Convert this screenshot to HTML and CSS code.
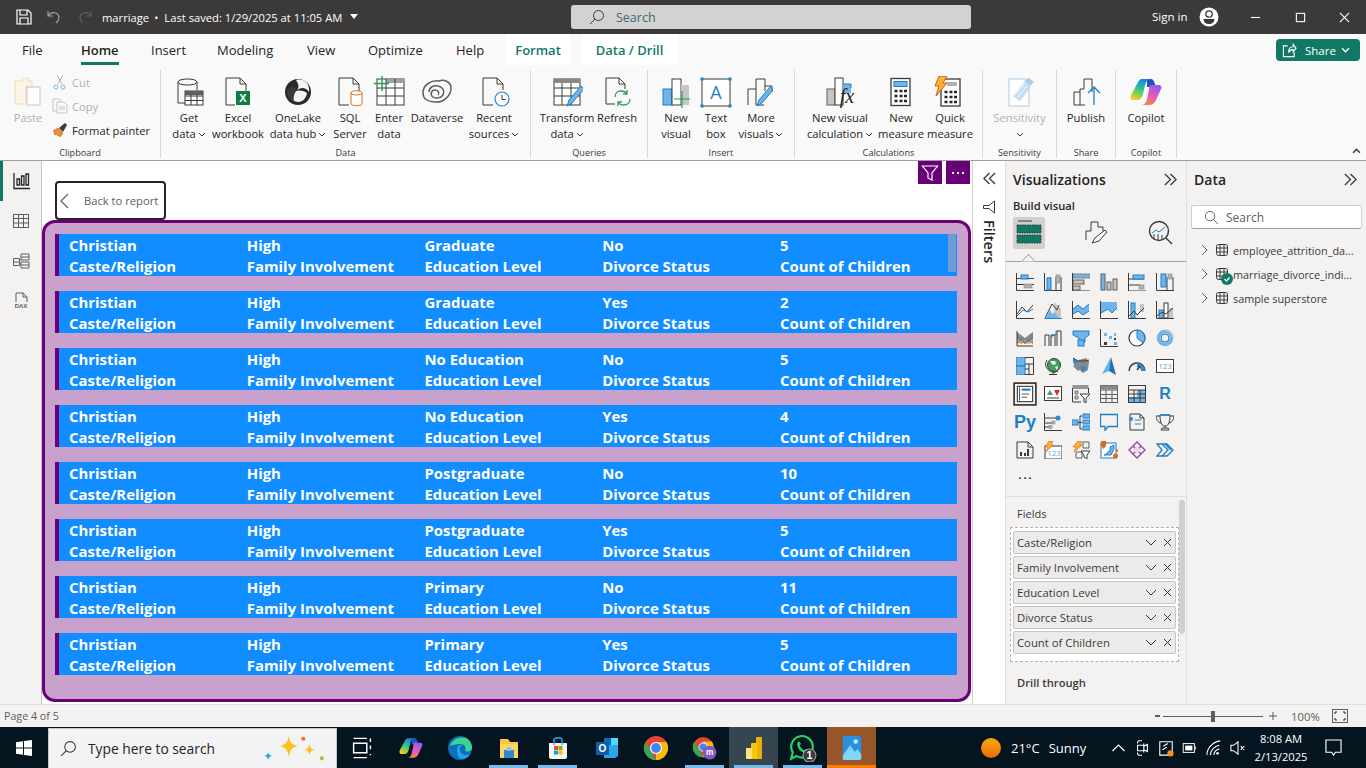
FILE: index.html
```html
<!DOCTYPE html>
<html lang="en">
<head>
<meta charset="utf-8">
<title>marriage - Power BI Desktop</title>
<link rel="stylesheet" href="styles.css">
</head>
<body>
<svg class="defs" aria-hidden="true">
  <defs>
    <linearGradient id="cp1" x1="0.700" y1="0" x2="0.300" y2="1"><stop offset="0" stop-color="#1b7fe0"/><stop offset=".45" stop-color="#27c0a0"/><stop offset=".75" stop-color="#8ed04a"/><stop offset="1" stop-color="#f6c833"/></linearGradient>
    <linearGradient id="cp2" x1="0.800" y1="0" x2="0.200" y2="1"><stop offset="0" stop-color="#8a5cf0"/><stop offset=".5" stop-color="#e45bb5"/><stop offset="1" stop-color="#f98a4a"/></linearGradient>
  </defs>
  <symbol id="chev" viewBox="0 0 8 5"><path class="k" d="M1 1l3 3 3-3"/></symbol>
  <symbol id="dbl" viewBox="0 0 14 14"><path class="k15" d="M1 1l6 6-6 6M7 1l6 6-6 6"/></symbol>
  <symbol id="tbl" viewBox="0 0 14 14"><rect class="k" x="1.5" y="1.5" width="11" height="11" rx="2"/><path class="k" d="M5 1.5v11M9 1.5v11M1.5 5h11M1.500 9h11"/></symbol>
  <symbol id="mag" viewBox="0 0 16 16"><circle class="k" cx="9.5" cy="6.5" r="5"/><path class="k" d="M6 10l-5 5"/></symbol>
  <symbol id="cop" viewBox="0 0 32 32">
    <path fill="#2255c4" d="M17 3h4c2 0 3 2 4 5l1 3h-9z"/>
    <path fill="url(#cp1)" d="M12 3h9c-3 0-5 2-6 6l-2 9c-1 4-3 6-6 6H3c-2 0-3-2-2-5L7 8c1-3 3-5 5-5z"/>
    <path fill="url(#cp2)" d="M21 9h8c2 0 3 2 2 4l-5 11c-1 3-4 5-7 5h-8c3 0 5-2 6-6l2-9c0-3 1-5 2-5z"/>
  </symbol>
</svg>

<header class="titlebar">
  <svg class="tb-ic" viewBox="0 0 16 16"><path class="w" d="M1 1h11l3 3v11H1zM4 1v5h7V1M4 15v-6h8v6"/></svg>
  <svg class="tb-ic undo" viewBox="0 0 16 16"><path class="dim" d="M2 2v5h5M2 7c2-3 5-4 8-3 4 2 4 7 0 10"/></svg>
  <svg class="tb-ic redo" viewBox="0 0 16 16"><path class="dim2" d="M14 2v5H9M14 7c-2-3-5-4-8-3-4 2-4 7 0 10"/></svg>
  <span class="doc">marriage</span><span class="doc dot">•</span><span class="doc">Last saved: 1/29/2025 at 11:05 AM</span>
  <span class="caret"></span>
  <div class="searchbar">
    <svg class="sb-ic" viewBox="0 0 16 16"><use href="#mag"/></svg><span>Search</span>
  </div>
  <span class="signin">Sign in</span>
  <svg class="avatar" viewBox="0 0 20 20"><circle cx="10" cy="10" r="9.5" fill="#fff"/><circle cx="10" cy="7" r="3.2" fill="none" stroke="#3b3a39" stroke-width="1.3"/><path d="M4.500 12h11c0 3-2.500 5-5.500 5s-5.500-2-5.500-5z" fill="#3b3a39"/></svg>
  <svg class="wc wc1" viewBox="0 0 12 12"><path class="w" d="M1 6h10"/></svg>
  <svg class="wc wc2" viewBox="0 0 12 12"><rect class="w" x="1.500" y="1.500" width="9" height="9"/></svg>
  <svg class="wc wc3" viewBox="0 0 12 12"><path class="w" d="M1 1l10 10M11 1L1 11"/></svg>
</header>

<nav class="tabs">
  <span class="tab t-file">File</span>
  <span class="tab t-home">Home</span>
  <span class="tab t-insert">Insert</span>
  <span class="tab t-model">Modeling</span>
  <span class="tab t-view">View</span>
  <span class="tab t-opt">Optimize</span>
  <span class="tab t-help">Help</span>
  <span class="tab t-ctx t-format">Format</span>
  <span class="tab t-ctx t-drill">Data / Drill</span>
  <button class="share">
    <svg class="share-ic" viewBox="0 0 16 16"><path class="w" d="M6 3H1.500v11.500H13V10M7 10c0-4 2-6 5-6V1.500l3 4-3 4V7c-2 0-4 1-5 3z"/></svg>
    Share
    <svg class="share-ch" viewBox="0 0 8 5"><path class="w" d="M1 1l3 3 3-3"/></svg>
  </button>
</nav>

<section class="ribbon">
  <div class="grp g-clip">
    <div class="grp-body">
      <div class="rb w-paste dis">
        <svg class="ric" viewBox="0 0 32 32"><path d="M6 5h4V2h6v3h4v6h-6v17H3V5z" fill="#fbf3e6" stroke="#f0d9b5"/><rect x="15" y="11" width="13" height="18" fill="#fff" stroke="#c8c6c4"/></svg>
        <span>Paste</span>
      </div>
      <div class="clip-col">
        <div class="cl dis"><svg class="cic" viewBox="0 0 16 16"><path d="M5 1l5 9M11 1L6 10" stroke="#b4b2b0" fill="none"/><circle cx="4" cy="13" r="2" fill="none" stroke="#88b6da"/><circle cx="11" cy="13" r="2" fill="none" stroke="#88b6da"/></svg>Cut</div>
        <div class="cl dis"><svg class="cic" viewBox="0 0 16 16"><path d="M1 1h7v3M1 1v12h4" fill="none" stroke="#c8c6c4"/><path d="M5 4h7l3 3v8H5zM7 9h6M7 11h6" fill="none" stroke="#c8c6c4"/></svg>Copy</div>
        <div class="cl"><svg class="cic" viewBox="0 0 16 16"><path d="M1 9l5-3 5 5-3 4-1-2-1 1-1-2-2 1-1-2 1-1z" fill="#e8912d" stroke="#b95d10" stroke-width=".6"/><path d="M7 6l6-5 2 2-4 7z" fill="#3b3a39"/></svg>Format painter</div>
      </div>
    </div>
    <div class="grp-lbl">Clipboard</div>
  </div>

  <div class="grp g-data">
    <div class="grp-body">
      <div class="rb w42">
        <svg class="ric" viewBox="0 0 32 32"><path class="k" d="M12 27H5V6c0-4 19-4 19 0v8M5 6c0 4 19 4 19 0"/><rect x="12" y="15" width="18" height="14" fill="#fff" stroke="#3b3a39"/><path class="k" d="M12 20h18M12 24.500h18M18 15v14M24 15v14"/><rect x="12" y="15" width="18" height="4" fill="#605e5c"/></svg>
        <span>Get<br>data<svg class="chev"><use href="#chev"/></svg></span>
      </div>
      <div class="rb w56">
        <svg class="ric" viewBox="0 0 32 32"><path class="k" d="M13 29H4V2h14l6 6v7M18 2v6h6"/><rect x="14" y="15" width="14" height="14" fill="#107c41"/><text class="xl" x="21" y="26" text-anchor="middle">X</text></svg>
        <span>Excel<br>workbook</span>
      </div>
      <div class="rb w64">
        <svg class="ric" viewBox="0 0 32 32"><circle cx="16" cy="16" r="13" fill="#2b2a29"/><path d="M14 4c8-2 14 3 13 12-3-5-8-5-12-2 3-3 1-7-1-10zM8 22c2-7 9-10 17-5-1 8-9 13-17 5z" fill="#f3f3f3"/><path d="M5 14c3-4 8-4 10 0-3 3-4 8-3 12-4-2-8-7-7-12z" fill="#3b3a39"/></svg>
        <span>OneLake<br>data hub<svg class="chev"><use href="#chev"/></svg></span>
      </div>
      <div class="rb w40">
        <svg class="ric" viewBox="0 0 32 32"><path class="k" d="M15 29H5V2h14l6 6v7M19 2v6h6"/><path d="M17 17c0-3 11-3 11 0v11c0 2-11 2-11 0z" fill="#fff" stroke="#d86e17"/><path d="M17 17c0 2.500 11 2.500 11 0" fill="none" stroke="#d86e17"/></svg>
        <span>SQL<br>Server</span>
      </div>
      <div class="rb w38">
        <svg class="ric" viewBox="0 0 32 32"><rect x="4" y="3" width="27" height="26" fill="#fff" stroke="#3b3a39"/><rect x="13" y="3" width="18" height="4" fill="#a19f9d"/><path class="k" d="M4 12h27M4 20h27M13 3v26M22 3v26"/><path d="M9 0v15M1 7.500h15" stroke="#1f9d55" stroke-width="1.400"/></svg>
        <span>Enter<br>data</span>
      </div>
      <div class="rb w58">
        <svg class="ric" viewBox="0 0 32 32"><path class="k15g" d="M2 17C2 8 11 4 18 5c5-2 12 1 12 7 0 8-8 15-16 14C7 26 2 23 2 17zM8 16c0-5 5-7 9-6 5 1 7 5 5 9-2 3-7 4-10 2-3-2-2-7 2-7 3 0 5 3 3 5"/></svg>
        <span>Dataverse</span>
      </div>
      <div class="rb w56">
        <svg class="ric" viewBox="0 0 32 32"><path class="k" d="M15 29H5V2h14l6 6v6M19 2v6h6"/><circle cx="24" cy="23" r="7" fill="#fff" stroke="#2585cf" stroke-width="1.200"/><path d="M24 19v4.500h3.500" fill="none" stroke="#3b3a39"/></svg>
        <span>Recent<br>sources<svg class="chev"><use href="#chev"/></svg></span>
      </div>
    </div>
    <div class="grp-lbl">Data</div>
  </div>

  <div class="grp g-query">
    <div class="grp-body">
      <div class="rb w52">
        <svg class="ric" viewBox="0 0 32 32"><rect x="3" y="3" width="26" height="26" fill="#fff" stroke="#3b3a39"/><rect x="3" y="3" width="26" height="4" fill="#8a8886"/><path class="k" d="M3 12h26M3 20h26M11 7v22M20 7v22"/><path d="M16 30l2-6 12-14 3 3-12 14z" fill="#6fb4ea" stroke="#1f7fc4"/></svg>
        <span>Transform<br>data<svg class="chev"><use href="#chev"/></svg></span>
      </div>
      <div class="rb w48">
        <svg class="ric" viewBox="0 0 32 32"><path class="k" d="M14 28H5V2h13l6 6v5M18 2v6h6"/><path class="grn" d="M14 21c0-4 3-6 6-6 3 0 5 1 6 3M29 23c0 4-3 6-6 6-3 0-5-1-6-3M26 14v4h-4M17 30v-4h4"/></svg>
        <span>Refresh</span>
      </div>
    </div>
    <div class="grp-lbl">Queries</div>
  </div>

  <div class="grp g-insert">
    <div class="grp-body">
      <div class="rb w40">
        <svg class="ric" viewBox="0 0 32 32"><rect x="3" y="13" width="9" height="16" fill="#6fb4ea" stroke="#1f7fc4"/><rect x="12" y="3" width="9" height="26" fill="#fff" stroke="#3b3a39"/><rect x="21" y="9" width="8" height="20" fill="#c8c6c4"/><path d="M22 15v17M14 23h16" stroke="#1f9d55" stroke-width="1.200"/></svg>
        <span>New<br>visual</span>
      </div>
      <div class="rb w40">
        <svg class="ric" viewBox="0 0 32 32"><rect x="2" y="3" width="28" height="27" fill="#fff" stroke="#3b3a39"/><path d="M2 3h.01M30 3h.01M2 30h.01M30 30h.01" stroke="#1f7fc4" stroke-width="3" stroke-linecap="square"/><text class="tbA" x="16" y="23" text-anchor="middle">A</text></svg>
        <span>Text<br>box</span>
      </div>
      <div class="rb w50">
        <svg class="ric" viewBox="0 0 32 32"><path class="k" d="M3 29V13h8V3h9v12M11 13v16h8M20 10h7v6"/><path d="M12 30l2-6 11-13 3 3-11 13z" fill="#6fb4ea" stroke="#1f7fc4"/></svg>
        <span>More<br>visuals<svg class="chev"><use href="#chev"/></svg></span>
      </div>
    </div>
    <div class="grp-lbl">Insert</div>
  </div>

  <div class="grp g-calc">
    <div class="grp-body">
      <div class="rb w68">
        <svg class="ric" viewBox="0 0 32 32"><rect x="3" y="13" width="8" height="16" fill="#c8c6c4" stroke="#605e5c"/><rect x="11" y="2" width="8" height="27" fill="#fff" stroke="#3b3a39"/><rect x="19" y="8" width="8" height="9" fill="#6fb4ea"/><path d="M19 8h8v4" fill="none" stroke="#1f7fc4"/><text class="fx" x="23" y="27" text-anchor="middle">fx</text></svg>
        <span>New visual<br>calculation<svg class="chev"><use href="#chev"/></svg></span>
      </div>
      <div class="rb w54">
        <svg class="ric" viewBox="0 0 32 32"><rect x="6" y="2.500" width="19" height="27" fill="#fff" stroke="#3b3a39" stroke-width="1.300"/><rect x="9" y="5.500" width="13" height="5" fill="#6fb4ea" stroke="#1f7fc4"/><path class="dots" d="M9.500 15h3M14.500 15h3M19 15h3M9.500 20h3M14.500 20h3M19 20h3M9.500 25h3M14.500 25h3M19 25h3"/></svg>
        <span>New<br>measure</span>
      </div>
      <div class="rb w44">
        <svg class="ric" viewBox="0 0 32 32"><rect x="7" y="3" width="19" height="27" fill="#fff" stroke="#3b3a39" stroke-width="1.300"/><rect x="13" y="6" width="10" height="4" fill="#b3b0ad"/><path class="dots" d="M10.500 16h3M15.500 16h3M20 16h3M10.500 21h3M15.500 21h3M20 21h3M10.500 26h3M15.500 26h3M20 26h3"/><path d="M5 0h8L9 7h4L2 20l3-10H1z" fill="#f8b133" stroke="#d05f0e"/></svg>
        <span>Quick<br>measure</span>
      </div>
    </div>
    <div class="grp-lbl">Calculations</div>
  </div>

  <div class="grp g-sens">
    <div class="grp-body">
      <div class="rb w72 dis">
        <svg class="ric" viewBox="0 0 32 32"><rect x="5" y="3" width="20" height="27" fill="#fff" stroke="#a9cde9"/><path d="M9 20l11-14 7 5-11 14z" fill="#c3dcf0"/><path d="M11 19l9-11M14 21l9-11" stroke="#fff"/><path d="M20 5l5-3 5 4-4 4z" fill="#a9cde9"/></svg>
        <span>Sensitivity<br><svg class="chev"><use href="#chev"/></svg></span>
      </div>
    </div>
    <div class="grp-lbl">Sensitivity</div>
  </div>

  <div class="grp g-share">
    <div class="grp-body">
      <div class="rb w58">
        <svg class="ric" viewBox="0 0 32 32"><path class="k" d="M15 29H4V16h6M10 29V13h4V3h8v13"/><path d="M24 29V11M18 17l6-6 6 6" fill="none" stroke="#1f7fc4" stroke-width="1.300"/></svg>
        <span>Publish</span>
      </div>
    </div>
    <div class="grp-lbl">Share</div>
  </div>

  <div class="grp g-copilot">
    <div class="grp-body">
      <div class="rb w60">
        <svg class="ric"><use href="#cop"/></svg>
        <span>Copilot</span>
      </div>
    </div>
    <div class="grp-lbl">Copilot</div>
  </div>
  <svg class="ribbon-collapse" viewBox="0 0 8 5"><path class="k15" d="M1 4l3-3 3 3"/></svg>
</section>

<main class="main">
  <aside class="rail">
    <div class="rail-i active"><svg viewBox="0 0 18 18"><path class="k2" d="M1 1v15.500h16M4 13V7h2.500v6zM8.500 13V4H11v9zM13 13V2h2.500v11z"/></svg></div>
    <div class="rail-i"><svg viewBox="0 0 18 18"><rect class="kg" x="1.500" y="2.500" width="15" height="13"/><path class="kg" d="M1.500 6.500h15M1.500 11h15M6.500 2.500v13M11.500 2.500v13"/></svg></div>
    <div class="rail-i"><svg viewBox="0 0 18 18"><path class="kg" d="M1.500 6.500h6v7h-6zM1.500 10h6M9 2h8v6H9zM9 5h8M9 10h8v6H9zM9 13h8M7.500 8H9M7.500 12H9"/></svg></div>
    <div class="rail-i"><svg viewBox="0 0 18 18"><path class="kg" d="M4 10V1h7l4 4v5M11 1v4h4"/><text class="dax" x="9" y="16" text-anchor="middle">DAX</text></svg></div>
  </aside>

  <div class="canvas">
    <div class="vis-head">
      <span class="vh-btn"><svg viewBox="0 0 18 18"><path class="w" d="M1.500 2h15L11 9v7l-4-2V9z"/></svg></span>
      <span class="vh-btn"><svg viewBox="0 0 18 18"><path class="dotsw" d="M3 9h2M8 9h2M13 9h2"/></svg></span>
    </div>
    <button class="back">
      <svg class="back-ic" viewBox="0 0 10 16"><path class="kb" d="M8 1L1 8l7 7"/></svg>
      Back to report
    </button>
    <section class="card">
      <div class="scroll-thumb"></div>
      <div class="row"><div><b>Christian</b><b>Caste/Religion</b></div><div><b>High</b><b>Family Involvement</b></div><div><b>Graduate</b><b>Education Level</b></div><div><b>No</b><b>Divorce Status</b></div><div><b>5</b><b>Count of Children</b></div></div>
      <div class="row"><div><b>Christian</b><b>Caste/Religion</b></div><div><b>High</b><b>Family Involvement</b></div><div><b>Graduate</b><b>Education Level</b></div><div><b>Yes</b><b>Divorce Status</b></div><div><b>2</b><b>Count of Children</b></div></div>
      <div class="row"><div><b>Christian</b><b>Caste/Religion</b></div><div><b>High</b><b>Family Involvement</b></div><div><b>No Education</b><b>Education Level</b></div><div><b>No</b><b>Divorce Status</b></div><div><b>5</b><b>Count of Children</b></div></div>
      <div class="row"><div><b>Christian</b><b>Caste/Religion</b></div><div><b>High</b><b>Family Involvement</b></div><div><b>No Education</b><b>Education Level</b></div><div><b>Yes</b><b>Divorce Status</b></div><div><b>4</b><b>Count of Children</b></div></div>
      <div class="row"><div><b>Christian</b><b>Caste/Religion</b></div><div><b>High</b><b>Family Involvement</b></div><div><b>Postgraduate</b><b>Education Level</b></div><div><b>No</b><b>Divorce Status</b></div><div><b>10</b><b>Count of Children</b></div></div>
      <div class="row"><div><b>Christian</b><b>Caste/Religion</b></div><div><b>High</b><b>Family Involvement</b></div><div><b>Postgraduate</b><b>Education Level</b></div><div><b>Yes</b><b>Divorce Status</b></div><div><b>5</b><b>Count of Children</b></div></div>
      <div class="row"><div><b>Christian</b><b>Caste/Religion</b></div><div><b>High</b><b>Family Involvement</b></div><div><b>Primary</b><b>Education Level</b></div><div><b>No</b><b>Divorce Status</b></div><div><b>11</b><b>Count of Children</b></div></div>
      <div class="row"><div><b>Christian</b><b>Caste/Religion</b></div><div><b>High</b><b>Family Involvement</b></div><div><b>Primary</b><b>Education Level</b></div><div><b>Yes</b><b>Divorce Status</b></div><div><b>5</b><b>Count of Children</b></div></div>
    </section>
  </div>

  <aside class="filters">
    <svg class="dbl flip" viewBox="0 0 14 14"><use href="#dbl"/></svg>
    <svg class="fil-ic" viewBox="0 0 14 14"><path class="k" d="M12.500 1v12L7 8.500H1.500v-3H7z"/></svg>
    <span class="fil-txt">Filters</span>
  </aside>

  <aside class="viz">
    <div class="pane-h"><span>Visualizations</span><svg class="dbl" viewBox="0 0 14 14"><use href="#dbl"/></svg></div>
    <div class="build">Build visual</div>
    <div class="mode">
      <span class="mode-b sel"><svg viewBox="0 0 26 26"><path class="k" d="M2 1h14"/><rect x="1" y="5" width="24" height="8" fill="#117865" stroke="#3b3a39" stroke-dasharray="1.500 1"/><rect x="1" y="15" width="24" height="8" fill="#117865" stroke="#3b3a39" stroke-dasharray="1.500 1"/></svg></span>
      <span class="mode-b m2"><svg viewBox="0 0 26 26"><path class="k" d="M3 20V11h5V2h7v5h5v4"/><path d="M9 23l3-5 10-8 2 2-8 9z" fill="#fff" stroke="#3b3a39"/></svg></span>
      <span class="mode-b m3"><svg viewBox="0 0 26 26"><circle class="k15" cx="11" cy="11" r="9.500"/><path class="k15" d="M18 18l6 6"/><path class="kbl" d="M4 13l4-3 3 2 6-5"/><path class="k" d="M6 19v-5M10 20v-6M14 20v-5"/></svg></span>
    </div>
    <div class="notch"></div>
    <div class="vgrid">
      <svg viewBox="0 0 18 18"><path class="k" d="M.500 0v17.500H18M.500 5.500H18M.500 11.500H18"/><rect class="lb" x="5" y="2" width="7" height="4"/><rect class="g" x="8" y="11" width="8" height="4"/></svg>
      <svg viewBox="0 0 18 18"><path class="k" d="M.500 0v17.500H18M6 4v13M12 4v13M17 4v13"/><rect class="lb" x="3" y="5" width="4" height="12"/><rect class="g" x="12" y="2" width="4" height="8"/></svg>
      <svg viewBox="0 0 18 18"><rect x="1" y="1" width="17" height="4" fill="#6fb4ea" stroke="#8a8886"/><rect x="1" y="7" width="11" height="4" fill="#c8c6c4" stroke="#605e5c"/><rect x="1" y="13" width="7" height="4" fill="#c8c6c4" stroke="#605e5c"/><path class="k" d="M.500 0v18H18"/></svg>
      <svg viewBox="0 0 18 18"><rect x="1" y="1" width="4" height="16" fill="#6fb4ea" stroke="#605e5c"/><rect x="7" y="9" width="4" height="8" fill="#c8c6c4" stroke="#605e5c"/><rect x="13" y="6" width="4" height="11" fill="#c8c6c4" stroke="#605e5c"/></svg>
      <svg viewBox="0 0 18 18"><path class="k" d="M.500 0v18H18M.500 6H16M.500 12H12"/><rect class="lb" x="5" y="2" width="11" height="4"/><rect class="g" x="11" y="12" width="5" height="4"/></svg>
      <svg viewBox="0 0 18 18"><path class="k" d="M.500 0v17.500H18M11 4v13M17 4v13"/><rect class="lb" x="5" y="1" width="5" height="13"/><rect class="g" x="12" y="1" width="4" height="5"/></svg>

      <svg viewBox="0 0 18 18"><path class="k" d="M.500 0v17.500H18"/><path class="k" d="M1 13l5-7 5 5 6-7"/><path class="kbl" d="M1 15l6-6 5 2 5-3"/></svg>
      <svg viewBox="0 0 18 18"><path d="M10 1l4 4 3 3v9h-7z" fill="#c8c6c4"/><path class="k" d="M1 17L8 3l5 6 2-5"/><path d="M1 17l5-8 5 8z" fill="#6fb4ea"/><path d="M6 17l4-6 5 6z" fill="#6fb4ea"/><path class="kbl" d="M.500 17.500H18"/></svg>
      <svg viewBox="0 0 18 18"><path d="M1 8l5-4 5 4 6-5v7l-6 4-5-4-5 3z" fill="#6fb4ea"/><path class="kbl" d="M1 8l5-4 5 4 6-5M1 13l5-3 5 4 6-4"/><path class="k" d="M.500 0v17.500H18"/></svg>
      <svg viewBox="0 0 18 18"><path d="M1 1h16v6l-5 5-4-4-7 4z" fill="#6fb4ea"/><path class="kbl" d="M1 12l7-4 4 4 5-5"/><path class="k" d="M.500 0v17.500H18"/></svg>
      <svg viewBox="0 0 18 18"><rect x="3" y="2" width="4" height="15" fill="#6fb4ea" stroke="#1f7fc4"/><rect x="12" y="3" width="4" height="8" fill="#c8c6c4"/><path class="k" d="M.500 0v17.500H18M1 15l5-5 3 4 7-7"/></svg>
      <svg viewBox="0 0 18 18"><rect x="3" y="9" width="4" height="8" fill="#6fb4ea" stroke="#1f7fc4"/><rect x="8" y="2" width="4" height="15" fill="#fff" stroke="#3b3a39"/><rect x="13" y="7" width="4" height="10" fill="#c8c6c4"/><path class="k" d="M.500 0v17.500H18M1 15l5-4 4 2 7-6"/></svg>

      <svg viewBox="0 0 18 18"><path d="M1 3l4 3 4 3 5-4 3-2v12l-4-2-4 2-4-3-4 3z" fill="#8a8886"/><path d="M1 9l4 4 4-2 4 3 4-5v3l-4 3-4-2-4 2-4-3z" fill="#e8912d"/><path class="kbl" d="M1 8l4 3 4 3 4-3 4-3"/><path class="k" d="M1 2v15h16"/></svg>
      <svg viewBox="0 0 18 18"><path class="k" d="M1 17V6h4v11M7 17V6h4v11M13 17V2h4v15"/><path class="kbl" d="M8 9V6h4V2h1"/></svg>
      <svg viewBox="0 0 18 18"><path d="M1 2h16v4l-4 3v4H7V9L1 6z" fill="#6fb4ea" stroke="#1f7fc4"/><rect x="6" y="11" width="6" height="6" fill="#6fb4ea" stroke="#1f7fc4"/></svg>
      <svg viewBox="0 0 18 18"><path class="k" d="M.500 0v17.500H18"/><path class="sq" d="M4 4h3v3H4zM9 7h3v3H9zM14 4h2v3h-2zM14 13h3v3h-3z"/><path fill="#3b3a39" d="M4 13h3v3H4zM14 9h2v2h-2z"/></svg>
      <svg viewBox="0 0 18 18"><circle cx="9" cy="9" r="8" fill="#fff" stroke="#3b3a39" stroke-width="1.200"/><path d="M9 1a8 8 0 0 1 6 13L9 9z" fill="#6fb4ea" stroke="#1f7fc4"/></svg>
      <svg viewBox="0 0 18 18"><circle cx="9" cy="9" r="6.500" fill="none" stroke="#6fb4ea" stroke-width="3.500"/><path d="M9 1a8 8 0 0 1 8 8" fill="none" stroke="#c8c6c4" stroke-width="2"/><circle cx="9" cy="9" r="4" fill="#f3f2f1" stroke="#1f7fc4"/></svg>

      <svg viewBox="0 0 18 18"><rect x="0" y="0" width="9" height="9" fill="#6fb4ea" stroke="#1f7fc4"/><rect x="0" y="9" width="9" height="9" fill="#6fb4ea" stroke="#1f7fc4"/><path class="k" d="M9 .500h8.500v17H9M9 7h8.500M13 7v10.500M9 12h4"/></svg>
      <svg viewBox="0 0 18 18"><circle cx="10" cy="8" r="6.500" fill="#3aa45b" stroke="#3b3a39"/><path d="M6 4h5l1 3-3 1zM11 10l3-1-1 4z" fill="#fff"/><path class="k" d="M3 3a8 8 0 0 0 11 11M9 16v1M5 17.500h8"/></svg>
      <svg viewBox="0 0 18 18"><path d="M1 5V1l5 3 1 5-2 3z" fill="#2f88d0"/><path d="M7 3l7-2 3 3-1 9-5 3-3-3-2 1-5-5z" fill="#8a8886"/><path d="M9 9h5l-1 4-4 2z" fill="#2f88d0"/><path d="M1 1l5 3h8l3-1" fill="none" stroke="#3b3a39"/></svg>
      <svg viewBox="0 0 18 18"><path d="M11 0L2 17l7-3z" fill="#5db4ea"/><path d="M11 0l-2 14 7 4z" fill="#1f6fb5"/></svg>
      <svg viewBox="0 0 18 18"><path class="k15" d="M1 14c0-5 4-8 8-8s8 3 8 8"/><path d="M9 6c4 0 8 3 8 8h-4c0-3-2-4-4-4z" fill="#2f88d0"/><path d="M9 13l3-4" stroke="#3b3a39" stroke-width="1.500"/></svg>
      <svg viewBox="0 0 18 18"><rect x=".5" y="2.500" width="17" height="13" fill="#fff" stroke="#3b3a39"/><text class="v123" x="9" y="12" text-anchor="middle">123</text></svg>

      <svg class="outline" viewBox="0 0 22 22"><rect x="1" y="1" width="20" height="20" fill="none" stroke="#252423" stroke-width="1.400"/><rect x="4" y="4" width="14" height="14" fill="#fff" stroke="#3b3a39"/><path d="M8 7h8" stroke="#1f7fc4" stroke-width="2"/><path class="kg" d="M6 5v12M8 11h7M8 14h5"/></svg>
      <svg viewBox="0 0 18 18"><rect x=".5" y="1.500" width="17" height="14" fill="#fff" stroke="#3b3a39"/><path d="M3 10l3-5 3 5z" fill="#3aa45b"/><path d="M10 5h6l-3 6z" fill="#d13438"/><path class="k" d="M3 13h12"/></svg>
      <svg viewBox="0 0 18 18"><path class="k" d="M.500 3v14H9M.500 3h16v5M.500 1h16"/><path class="sqg" d="M3 6h3v3H3zM3 11h3v3H3z"/><path d="M8 9h10l-4 4v5l-2-1v-4z" fill="#fff" stroke="#3b3a39"/></svg>
      <svg viewBox="0 0 18 18"><rect class="kg" x=".5" y=".5" width="17" height="17"/><path class="kg" d="M.500 5h17M.500 9.500h17M.500 13.500h17M6 5v12.500M12 5v12.500"/><path d="M.500 .500h17v4H.500z" fill="#8a8886"/></svg>
      <svg viewBox="0 0 18 18"><rect x="9" y="5" width="9" height="13" fill="#6fb4ea"/><rect x="0" y="12" width="9" height="6" fill="#6fb4ea"/><rect class="k" x=".5" y=".5" width="17" height="17"/><path class="k" d="M.500 5h17M.500 9h17M.500 13h17M6 5v13M12 5v13"/></svg>
      <span class="v-r">R</span>

      <span class="v-py">Py</span>
      <svg viewBox="0 0 18 18"><path class="k" d="M.500 0v17.500H18M.500 5H13M.500 10H8M.500 14H6"/><circle class="bf" cx="14" cy="5" r="2.500"/><rect class="g" x="8" y="8" width="3" height="3"/><rect class="g" x="5" y="12.500" width="3" height="3"/></svg>
      <svg viewBox="0 0 18 18"><rect class="lbf" x="0" y="7" width="6" height="5"/><path class="k" d="M6 9.500h4M8 3v13M8 3h2M8 16h2"/><rect class="lbf" x="11" y="1" width="7" height="4"/><rect class="lbf" x="11" y="7" width="7" height="4"/><rect class="lbf" x="11" y="13" width="7" height="4"/></svg>
      <svg viewBox="0 0 18 18"><path class="kbl2" d="M.500 1.500h17v12H8l-3 4v-4H.500z"/></svg>
      <svg viewBox="0 0 18 18"><path class="k" d="M2 1h10l4 4v12H2zM12 1v4h4"/><circle class="bf" cx="3" cy="6" r="2"/><path class="kbl" d="M7 7h6M7 11h6"/></svg>
      <svg viewBox="0 0 18 18"><path class="k" d="M4 2C4 8 5 13 9 13s5-5 5-11zM4 3H0c0 4 2 6 5 7M14 3h4c0 4-2 6-5 7M9 13v2M5 17h8l-1-2H6z"/><path d="M4 1h10v2H4z" fill="#2f88d0"/></svg>

      <svg viewBox="0 0 18 18"><path class="k" d="M1 1h11l5 5v11H1zM12 1v5h5"/><path d="M4 11h2v4H4zM8 12h2v3H8zM11 8h2v7h-2z" fill="#3b3a39"/></svg>
      <svg viewBox="0 0 18 18"><rect x="1" y="5" width="17" height="13" fill="#fff" stroke="#3b3a39"/><text class="v123" x="10" y="15" text-anchor="middle">123</text><path d="M5 0h4L7 4h2L2 11l2-5H1z" fill="#f8b133" stroke="#d05f0e" stroke-width=".6"/></svg>
      <svg viewBox="0 0 18 18"><path class="kg" d="M11 1h6v6h-6zM4 11h6v6H4z"/><path d="M6 0h4L8 4h2L2 11l2-5H1z" fill="#f8b133" stroke="#d05f0e" stroke-width=".6"/><path d="M9 10h9l-3 4v4l-3-2v-2z" fill="#fff" stroke="#3b3a39"/></svg>
      <svg viewBox="0 0 18 18"><rect x="1" y="2" width="15" height="15" fill="#fff" stroke="#1f7fc4"/><path d="M4 14c3 0 3-4 6-4V6l4-2v4l-3 6z" fill="#6fb4ea" stroke="#1f7fc4"/><path d="M1 0h5v5l-2.500 3L1 5z" fill="#d86e17"/><circle cx="15.500" cy="15" r="2.500" fill="#d86e17"/><circle cx="17" cy="9.500" r="1.300" fill="#d86e17"/></svg>
      <svg viewBox="0 0 18 18"><path d="M9 1l8 8-8 8-8-8z" fill="none" stroke="#9b4fb0" stroke-width="1.500"/><path d="M5 5l8 8M13 5l-8 8" stroke="#9b4fb0" stroke-width="1.500"/><path d="M9 5l4 4-4 4-4-4z" fill="#e8d4ec"/></svg>
      <svg viewBox="0 0 18 18"><path class="kbl2" d="M1 3h10l6 6-6 6H1l5-6zM6 3l6 6-6 6M9 3l6 6"/></svg>
      <span class="v-more">• • •</span>
    </div>
    <div class="fields">
      <div class="f-track"></div>
      <div class="f-lbl">Fields</div>
      <div class="well">
        <div class="chip"><span>Caste/Religion</span><svg class="c1" viewBox="0 0 12 7"><path class="k" d="M1 1l5 5 5-5"/></svg><svg class="c2" viewBox="0 0 9 9"><path class="k" d="M1 1l7 7M8 1L1 8"/></svg></div>
        <div class="chip"><span>Family Involvement</span><svg class="c1" viewBox="0 0 12 7"><path class="k" d="M1 1l5 5 5-5"/></svg><svg class="c2" viewBox="0 0 9 9"><path class="k" d="M1 1l7 7M8 1L1 8"/></svg></div>
        <div class="chip"><span>Education Level</span><svg class="c1" viewBox="0 0 12 7"><path class="k" d="M1 1l5 5 5-5"/></svg><svg class="c2" viewBox="0 0 9 9"><path class="k" d="M1 1l7 7M8 1L1 8"/></svg></div>
        <div class="chip"><span>Divorce Status</span><svg class="c1" viewBox="0 0 12 7"><path class="k" d="M1 1l5 5 5-5"/></svg><svg class="c2" viewBox="0 0 9 9"><path class="k" d="M1 1l7 7M8 1L1 8"/></svg></div>
        <div class="chip"><span>Count of Children</span><svg class="c1" viewBox="0 0 12 7"><path class="k" d="M1 1l5 5 5-5"/></svg><svg class="c2" viewBox="0 0 9 9"><path class="k" d="M1 1l7 7M8 1L1 8"/></svg></div>
      </div>
      <div class="drill">Drill through</div>
    </div>
  </aside>

  <aside class="data">
    <div class="pane-h"><span>Data</span><svg class="dbl" viewBox="0 0 14 14"><use href="#dbl"/></svg></div>
    <div class="d-search"><svg viewBox="0 0 16 16"><circle class="kg" cx="6.500" cy="6.500" r="5"/><path class="kg" d="M10 10l5 5"/></svg><span>Search</span></div>
    <div class="tree">
      <div class="ti"><svg class="ti-ch" viewBox="0 0 7 12"><path class="kg" d="M1 1l5 5-5 5"/></svg><svg class="ti-t" viewBox="0 0 14 14"><use href="#tbl"/></svg><span>employee_attrition_da...</span></div>
      <div class="ti"><svg class="ti-ch" viewBox="0 0 7 12"><path class="kg" d="M1 1l5 5-5 5"/></svg><span class="ti-w"><svg class="ti-t" viewBox="0 0 14 14"><use href="#tbl"/></svg><svg class="ti-ok" viewBox="0 0 12 12"><circle cx="6" cy="6" r="6" fill="#117865"/><path d="M3.500 6l2 2 3-3.500" fill="none" stroke="#fff" stroke-width="1.200"/></svg></span><span>marriage_divorce_indi...</span></div>
      <div class="ti"><svg class="ti-ch" viewBox="0 0 7 12"><path class="kg" d="M1 1l5 5-5 5"/></svg><svg class="ti-t" viewBox="0 0 14 14"><use href="#tbl"/></svg><span>sample superstore</span></div>
    </div>
  </aside>
</main>

<footer class="status">
  <span>Page 4 of 5</span>
  <div class="zoom">
    <span class="z-m"></span>
    <div class="z-track"><i class="z-thumb"></i></div>
    <svg class="z-p" viewBox="0 0 8 8"><path class="kg" d="M4 0v8M0 4h8"/></svg>
    <span class="z-v">100%</span>
    <svg class="z-f" viewBox="0 0 16 14"><rect class="kg" x=".5" y=".5" width="15" height="13"/><path d="M3 5V3h2M11 3h2v2M13 9v2h-2M5 11H3V9" fill="none" stroke="#252423"/></svg>
  </div>
</footer>

<footer class="taskbar">
  <div class="start"><svg viewBox="0 0 16 16"><path fill="#fff" d="M0 2.200l7-1v6.300H0zM8 1l8-1v7.500H8zM0 8.500h7v6.300l-7-1zM8 8.500h8V16l-8-1.100z"/></svg></div>
  <div class="tsearch">
    <svg class="ts-ic" viewBox="0 0 16 16"><use href="#mag"/></svg>
    <span>Type here to search</span>
    <svg class="ts-spark" viewBox="0 0 60 28"><path d="M24 2c1 7 3 9 9 10-6 1-8 4-9 11-1-7-3-10-9-11 6-1 8-3 9-10z" fill="#fcc21b"/><path d="M44 10c.5 4 2 5 5 6-3 .5-4.500 2-5 5-.5-3-2-4.500-5-5 3-1 4.500-2 5-6z" fill="#fcc21b"/><path d="M4 18c.5 2 1.500 3 4 3.500-2.500.5-3.500 2-4 4-.5-2-1.500-3.500-3.500-4 2-.5 3-1.500 3.500-3.500z" fill="#2ba5e8"/><circle cx="38" cy="5" r="2" fill="#f4683b"/><circle cx="56" cy="24" r="2" fill="#93c83e"/></svg>
  </div>
  <div class="tk"><svg viewBox="0 0 20 20"><path class="w" d="M3 6h11v8H3zM3 2h11M3 18h11M17 2v3M17 8v3M17 15v1"/></svg></div>
  <div class="tk"><svg><use href="#cop"/></svg></div>
  <div class="tk"><svg viewBox="0 0 24 24"><circle cx="12" cy="12" r="12" fill="#0c6fb8"/><path d="M2 10C4 3 12 0 18 2c4 2 6 6 6 10 0 3-4 4-7 3 2-3 0-7-5-7-4 0-8 1-10 2z" fill="#3cd48f"/><path d="M9 13c0-3 3-5 6-4-5 1-4 9 2 10 3 0 5-1 5-1-2 4-7 6-11 4-2-2-2-6-2-9z" fill="#1ba7e8"/></svg></div>
  <div class="tk run"><svg viewBox="0 0 24 24"><path d="M3 3h8l2 3h8v16H3z" fill="#f8c73f"/><path d="M3 8h18v14H3z" fill="#fbd760"/><rect x="7" y="14" width="10" height="8" fill="#2f88d0"/><rect x="10" y="11" width="4" height="4" fill="#7fc4ee"/></svg></div>
  <div class="tk run"><svg viewBox="0 0 24 24"><path d="M3 7h18v14a2 2 0 0 1-2 2H5a2 2 0 0 1-2-2z" fill="#f5f5f5"/><path d="M8 9V4c0-3 8-3 8 0v5" fill="none" stroke="#2ba5e8" stroke-width="1.500"/><path fill="#f25022" d="M8 10h4v4H8z"/><path fill="#7fba00" d="M12.500 10h4v4h-4z"/><path fill="#00a4ef" d="M8 14.500h4v4H8z"/><path fill="#ffb900" d="M12.500 14.500h4v4h-4z"/></svg></div>
  <div class="tk"><svg viewBox="0 0 24 24"><path d="M9 2h12a2 2 0 0 1 2 2v16l-3 2H9z" fill="#28a8ea"/><path d="M9 2h7v7H9z" fill="#0a6cc1"/><path d="M16 2h7v7h-7z" fill="#50d9ff"/><path d="M1 6h13v13H1z" fill="#0f5ea8"/><text class="ol" x="7.500" y="16" text-anchor="middle">O</text></svg></div>
  <div class="tk"><svg viewBox="0 0 24 24"><circle cx="12" cy="12" r="12" fill="#ea4335"/><path d="M1.600 6L12 24a12 12 0 0 1-10.400-18z" fill="#34a853"/><path d="M12 24a12 12 0 0 0 10.400-18H12z" fill="#fbbc05"/><path d="M12 24l5-12h5.400a12 12 0 0 1-10.400 12z" fill="#fbbc05"/><circle cx="12" cy="12" r="5.500" fill="#4285f4" stroke="#fff" stroke-width="1.200"/></svg></div>
  <div class="tk run"><svg viewBox="0 0 26 26"><circle cx="11" cy="12" r="11" fill="#ea4335"/><path d="M1.500 6L11 23a11 11 0 0 1-9.500-17z" fill="#34a853"/><path d="M11 23a11 11 0 0 0 9.500-17H11z" fill="#fbbc05"/><circle cx="11" cy="12" r="4.500" fill="#4285f4" stroke="#fff"/><circle cx="18" cy="18" r="7.500" fill="#7a5cc0"/><text class="mm" x="18" y="21" text-anchor="middle">m</text></svg></div>
  <div class="tk active run"><svg viewBox="0 0 24 24"><rect x="14" y="1" width="6" height="22" rx="1" fill="#e9b200"/><rect x="9" y="7" width="6" height="16" rx="1" fill="#f2c811"/><rect x="4" y="12" width="6" height="11" rx="1" fill="#fde37a"/></svg></div>
  <div class="tk run wa"><svg viewBox="0 0 26 26"><path d="M2 23l1.500-6A10 10 0 1 1 7 20.500z" fill="none" stroke="#25d366" stroke-width="2"/><path d="M8 8c1-2 2-1 3 1l-1 2c1 2 2 3 4 4l2-1c2 1 2 2 1 3-2 2-11-2-9-9z" fill="#25d366"/><circle cx="19" cy="20" r="6" fill="#3b3a39" stroke="#9b9b9b"/><text class="wn" x="19" y="23.500" text-anchor="middle">1</text></svg></div>
  <div class="tk photos"><svg viewBox="0 0 24 26"><rect x="2" y="0" width="20" height="26" rx="2" fill="#2b8fe0"/><path d="M2 21l8-11 5 7 3-3 4 6v4a2 2 0 0 1-2 2H4a2 2 0 0 1-2-2z" fill="#7fd6f5"/><circle cx="16" cy="6" r="2.500" fill="#bfe9fb"/></svg></div>

  <div class="weather">
    <span class="sun"></span><span>21°C</span><span class="sunny">Sunny</span>
  </div>
  <div class="tray">
    <svg class="up" viewBox="0 0 14 8"><path class="w" d="M1 7l6-6 6 6"/></svg>
    <svg class="tr" viewBox="0 0 16 20"><path class="w" d="M3 5V4.500C3 3 4 2 5 2h3M3 15v.5C3 17 4 18 5 18h3M10 5v10M3 7h7v6H3zM10 8l4-2v8l-4-2"/></svg>
    <svg class="tr" viewBox="0 0 18 20"><path class="w" d="M2 3h14v15H2z"/><path class="w" d="M6 8l5-3M5 12l5-3"/><circle cx="14" cy="16" r="3.500" fill="#f7941d"/></svg>
    <svg class="tr" viewBox="0 0 20 14"><rect class="w" x="1.500" y="1.500" width="14" height="11"/><rect x="4" y="4" width="9" height="6" fill="#fff"/><path d="M17 5v4" stroke="#fff"/></svg>
    <svg class="tr" viewBox="0 0 18 18"><path class="w" d="M1 17C1 9 8 2 16 1M5 17c0-5 4-10 10-11M9 17c0-3 2-6 6-7"/><circle cx="13" cy="15" r="1.500" fill="#fff"/></svg>
    <svg class="tr" viewBox="0 0 18 18"><path class="w" d="M1 6h3l5-4v14l-5-4H1zM12 7l4 4M16 7l-4 4"/></svg>
  </div>
  <div class="clock"><span>8:08 AM</span><span>2/13/2025</span></div>
  <svg class="notif" viewBox="0 0 18 18"><path class="w" d="M1 1h16v13h-6l-2 3-2-3H1z"/></svg>
</footer>
</body>
</html>
```

FILE: styles.css
```css
* { box-sizing: border-box; }
html, body { margin: 0; padding: 0; }
body {
  width: 1366px; height: 768px; overflow: hidden;
  display: flex; flex-direction: column;
  font-family: "Open Sans", "Noto Sans", sans-serif;
  color: #252423; background: #f3f2f1;
}
.defs { position: absolute; width: 0; height: 0; }

/* svg paint helpers */
.k { fill: none; stroke: #3b3a39; stroke-width: 1; }
.k15 { fill: none; stroke: #3b3a39; stroke-width: 1.400; }
.k2 { fill: none; stroke: #252423; stroke-width: 1.300; }
.kg { fill: none; stroke: #605e5c; stroke-width: 1; }
.k15g { fill: none; stroke: #605e5c; stroke-width: 1.500; }
.kb { fill: none; stroke: #605e5c; stroke-width: 1.200; }
.kbl { fill: none; stroke: #1f7fc4; stroke-width: 1; }
.kbl2 { fill: none; stroke: #1f7fc4; stroke-width: 1.300; }
.w { fill: none; stroke: #fff; stroke-width: 1.200; }
.dim { fill: none; stroke: #a19f9d; stroke-width: 1.200; }
.dim2 { fill: none; stroke: #605e5c; stroke-width: 1.200; }
.grn { fill: none; stroke: #2f9e57; stroke-width: 1.300; }
.dots { fill: none; stroke: #252423; stroke-width: 2.500; }
.dotsw { fill: none; stroke: #fff; stroke-width: 2.200; }
.lb { fill: #6fb4ea; stroke: #1f7fc4; stroke-width: 1; }
.lbf { fill: #6fb4ea; stroke: #1f7fc4; stroke-width: 1; }
.bf { fill: #2f88d0; }
.g { fill: #b3b0ad; stroke: #8a8886; stroke-width: .6; }
.sq { fill: #6fb4ea; }
.sqg { fill: #c8c6c4; stroke: #605e5c; stroke-width: .8; }
.xl { font: 700 11px "Liberation Sans", sans-serif; fill: #fff; }
.tbA { font: 400 18px "Open Sans", sans-serif; fill: #1f7fc4; }
.fx { font: italic 400 20px "Liberation Serif", serif; fill: #252423; }
.dax { font: 700 6px "Liberation Sans", sans-serif; fill: #605e5c; }
.v123 { font: 400 8px "Open Sans", sans-serif; fill: #5ea9dd; }
.ol { font: 700 10px "Liberation Sans", sans-serif; fill: #fff; }
.mm { font: 700 9px "Liberation Sans", sans-serif; fill: #fff; }
.wn { font: 700 10px "Liberation Sans", sans-serif; fill: #fff; }

/* title bar */
.titlebar {
  height: 34px; flex: none; background: #3b3a39; color: #fff;
  display: flex; align-items: center; position: relative; padding-left: 16px;
}
.tb-ic { width: 16px; height: 16px; flex: none; }
.undo { margin-left: 14px; }
.redo { margin-left: 15px; }
.doc { font-size: 11.200px; margin-left: 9px; white-space: nowrap; }
.dot { margin-left: 5px; margin-right: -3px; }
.caret { width: 0; height: 0; border: 4.500px solid transparent; border-top: 5px solid #fff; border-bottom: 0; margin-left: 8px; margin-top: -2px; }
.searchbar {
  position: absolute; left: 571px; top: 5px; width: 400px; height: 24px;
  background: #d2d2d2; border-radius: 3px; display: flex; align-items: center;
  padding-left: 18px; color: #3f6a6a; font-size: 12.500px;
}
.sb-ic { width: 16px; height: 16px; margin-right: 11px; }
.signin { position: absolute; left: 1152px; top: 9px; font-size: 11.500px; }
.avatar { position: absolute; left: 1199px; top: 7px; width: 20px; height: 20px; }
.wc { position: absolute; top: 12px; width: 11px; height: 11px; }
.wc1 { left: 1250px; } .wc2 { left: 1295px; } .wc3 { left: 1339px; }

/* tabs */
.tabs { height: 31px; flex: none; background: #f9f9f9; position: relative; font-size: 13px; color: #252423; }
.tab { position: absolute; top: 7px; line-height: 18px; white-space: nowrap; }
.t-file { left: 22px; }
.t-home { left: 81px; font-weight: 600; width: 38px; height: 24px; border-bottom: 3px solid #117865; top: 7px; }
.t-insert { left: 151px; }
.t-model { left: 217px; }
.t-view { left: 307px; }
.t-opt { left: 368px; }
.t-help { left: 456px; }
.t-ctx { top: 0; height: 31px; background: #fff; color: #117865; font-weight: 600; line-height: 32px; text-align: center; }
.t-format { left: 505px; width: 66px; }
.t-drill { left: 581px; width: 97px; }
.share {
  position: absolute; left: 1276px; top: 5px; width: 84px; height: 22px;
  background: #117865; color: #fff; border: 0; border-radius: 4px; padding: 0 0 0 6px;
  font: 11.500px "Open Sans", sans-serif; display: flex; align-items: center;
}
.share-ic { width: 15px; height: 15px; margin-right: 8px; }
.share-ch { width: 9px; height: 6px; margin-left: 5px; }

/* ribbon */
.ribbon { height: 96px; flex: none; background: #f9f9f9; border-bottom: 1px solid #a19f9d; display: flex; position: relative; padding-top: 5px; }
.grp { border-right: 1px solid #dcdad8; display: flex; flex-direction: column; height: 88px; flex: none; }
.grp-body { display: flex; height: 78px; padding-top: 6px; }
.grp-lbl { height: 10px; line-height: 10px; font-size: 9.200px; text-align: center; color: #3b3a39; margin-top: 1px; white-space: nowrap; }
.g-clip { width: 161px; } .g-data { width: 370px; } .g-query { width: 117px; } .g-insert { width: 147px; }
.g-calc { width: 188px; } .g-sens { width: 74px; } .g-share { width: 59px; } .g-copilot { width: 61px; }
.g-data .grp-body { padding-left: 7px; }
.g-query .grp-body { padding-left: 10px; }
.g-insert .grp-body { padding-left: 8px; }
.g-calc .grp-body { padding-left: 11px; }
.rb { display: flex; flex-direction: column; align-items: center; flex: none; font-size: 11.200px; line-height: 16px; text-align: center; color: #252423; white-space: nowrap; }
.rb span { display: block; margin-top: 2px; }
.ric { width: 32px; height: 32px; flex: none; }
.rb.dis, .cl.dis { color: #b3b0ad; }
.chev { width: 8px; height: 5px; margin-left: 2px; vertical-align: 1px; }
.w-paste { width: 54px; margin-left: 1px; }
.w38 { width: 38px; } .w40 { width: 40px; } .w42 { width: 42px; } .w44 { width: 44px; } .w48 { width: 48px; } .w50 { width: 50px; }
.w52 { width: 52px; } .w54 { width: 54px; } .w56 { width: 56px; } .w58 { width: 58px; } .w60 { width: 60px; } .w64 { width: 64px; } .w68 { width: 68px; } .w72 { width: 73px; }
.clip-col { display: flex; flex-direction: column; gap: 4px; font-size: 11.200px; margin-top: -4px; }
.cl { display: flex; align-items: center; height: 20px; white-space: nowrap; margin-left: -3px; }
.cic { width: 16px; height: 16px; margin-right: 4px; }
.ribbon-collapse { position: absolute; left: 1352px; top: 83px; width: 9px; height: 6px; }

/* main */
.main { height: 543px; flex: none; display: flex; }
.rail { width: 42px; flex: none; background: #f3f2f1; border-right: 1px solid #c8c6c4; display: flex; flex-direction: column; }
.rail-i { height: 40px; flex: none; display: flex; align-items: center; justify-content: center; }
.rail-i svg { width: 18px; height: 18px; }
.rail-i.active { border-left: 3px solid #117865; padding-right: 1px; }

.canvas { width: 930px; flex: none; background: #fff; position: relative; display: flex; flex-direction: column; }
.vis-head { position: absolute; top: 0; right: 2px; display: flex; gap: 4px; }
.vh-btn { width: 24px; height: 23px; background: #6a0078; display: flex; align-items: center; justify-content: center; }
.vh-btn svg { width: 18px; height: 18px; }
.back {
  margin: 20px 0 0 13px; width: 111px; height: 39px; flex: none;
  background: #fff; border: 2px solid #252423; border-radius: 4px;
  font: 11.200px "Open Sans", sans-serif; color: #605e5c;
  display: flex; align-items: center; padding: 0 0 0 3px; white-space: nowrap;
}
.back-ic { width: 10px; height: 16px; margin-right: 14px; }
.card {
  width: 929px; height: 482px; flex: none; position: relative;
  background: #c8a2cc; border: 3px solid #6a0078; border-radius: 13px;
  padding: 11px 11px 0 10px; display: flex; flex-direction: column; gap: 15px;
}
.row {
  height: 42px; flex: none; background: #118dff; border-left: 4px solid #6a0078;
  padding-left: 10px; display: grid; grid-template-columns: repeat(5, 177.750px);
}
.row div { display: flex; flex-direction: column; height: 42px; }
.row b { display: block; color: #fff; font-size: 14.900px; font-weight: 700; line-height: 21px; white-space: nowrap; position: relative; top: .5px; }
.scroll-thumb { position: absolute; left: 903px; top: 11px; width: 8px; height: 38px; background: #6b9fd4; z-index: 1; }

.filters { width: 33px; flex: none; background: #fff; border-left: 1px solid #d2d0ce; display: flex; flex-direction: column; align-items: center; padding-top: 11px; }
.dbl { width: 13px; height: 13px; flex: none; }
.flip { transform: scaleX(-1); }
.fil-ic { width: 14px; height: 14px; margin-top: 15px; }
.fil-txt { writing-mode: vertical-rl; font-size: 14.500px; font-weight: 600; margin-top: 6px; line-height: 18px; color: #252423; }

.viz { width: 181px; flex: none; background: #f3f2f1; border-left: 1px solid #e1dfdd; display: flex; flex-direction: column; position: relative; }
.pane-h { display: flex; justify-content: space-between; align-items: center; height: 20px; margin-top: 8px; padding: 0 9px 0 7px; font-size: 14px; font-weight: 600; color: #252423; flex: none; }
.build { font-size: 11.200px; font-weight: 600; color: #252423; margin: 9px 0 0 7px; line-height: 16px; height: 16px; }
.mode { display: flex; height: 32px; margin: 3px 0 0 7px; position: relative; }
.mode-b { width: 32px; height: 32px; display: flex; align-items: center; justify-content: center; flex: none; }
.mode-b svg { width: 26px; height: 26px; }
.sel { background: #d2d0ce; border-radius: 2px; }
.m2 { margin-left: 35px; }
.m3 { margin-left: 33px; }
.notch { height: 1px; background: #a19f9d; margin-top: 12px; position: relative; }
.notch::after { content: ""; position: absolute; left: 17px; top: -5px; width: 10px; height: 10px; background: #f3f2f1; border-left: 1px solid #a19f9d; border-top: 1px solid #a19f9d; transform: rotate(45deg); clip-path: polygon(0 0, 100% 0, 0 100%); }
.vgrid { display: grid; grid-template-columns: repeat(6, 28px); grid-auto-rows: 28px; margin: 6px 0 0 5px; justify-items: center; align-items: center; }
.vgrid svg { width: 18px; height: 18px; display: block; }
.vgrid svg.outline { width: 24px; height: 24px; }
.v-r, .v-py { color: #1f7fc4; font-weight: 700; line-height: 18px; font-family: "Liberation Sans", sans-serif; }
.v-r { font-size: 16px; }
.v-py { font-size: 18px; }
.v-more { font-size: 8px; color: #252423; line-height: 18px; white-space: nowrap; }
.fields { border-top: 1px solid #e1dfdd; margin-top: 4px; flex: 1; position: relative; padding-left: 4px; }
.f-track { position: absolute; left: 173px; top: 3px; width: 6px; height: 134px; background: #d2d0ce; border-radius: 3px; }
.f-lbl { font-size: 11px; line-height: 16px; margin: 9px 0 0 7px; color: #3b3a39; }
.well { width: 169px; height: 135px; margin-top: 5px; background: #fff; border: 1px dashed #b3b0ad; padding: 3px 2px; display: flex; flex-direction: column; gap: 2px; }
.chip { height: 23px; flex: none; background: #edebe9; border: 1px solid #c8c6c4; border-radius: 2px; display: flex; align-items: center; padding-left: 3px; font-size: 11.300px; color: #3b3a39; }
.chip span { flex: 1; white-space: nowrap; }
.c1 { width: 12px; height: 7px; margin-right: 6px; }
.c2 { width: 9px; height: 9px; margin-right: 3px; }
.drill { font-size: 11.200px; font-weight: 600; margin: 13px 0 0 7px; line-height: 16px; color: #3b3a39; }

.data { flex: 1; background: #f3f2f1; border-left: 1px solid #e1dfdd; display: flex; flex-direction: column; }
.d-search { height: 24px; margin: 16px 4px 0 4px; flex: none; background: #fff; border: 1px solid #d2d0ce; border-bottom-color: #a19f9d; border-radius: 3px; display: flex; align-items: center; padding-left: 12px; font-size: 12px; color: #605e5c; }
.d-search svg { width: 15px; height: 15px; margin-right: 7px; }
.tree { margin: 9px 0 0 14px; display: flex; flex-direction: column; }
.ti { height: 24px; display: flex; align-items: center; font-size: 10.800px; color: #3b3a39; white-space: nowrap; }
.ti-ch { width: 7px; height: 12px; margin-right: 7px; flex: none; }
.ti-t { width: 14px; height: 14px; margin-right: 4px; flex: none; }
.ti-w { display: flex; position: relative; }
.ti-ok { position: absolute; left: 6px; top: 6px; width: 12px; height: 12px; }

/* status */
.status { height: 23px; flex: none; background: #f3f2f1; border-top: 1px solid #e1dfdd; display: flex; align-items: center; padding-left: 4px; font-size: 10.700px; color: #605e5c; position: relative; }
.zoom { margin-left: auto; display: flex; align-items: center; padding-right: 18px; }
.z-m { width: 5px; height: 2px; background: #605e5c; margin-right: 3px; }
.z-track { width: 100px; height: 1px; background: #605e5c; position: relative; }
.z-thumb { position: absolute; left: 48px; top: -5px; width: 4px; height: 11px; background: #605e5c; }
.z-p { width: 8px; height: 8px; margin-left: 6px; }
.z-v { font-size: 11.300px; margin-left: 14px; width: 28px; }
.z-f { width: 16px; height: 14px; margin-left: 13px; }

/* taskbar */
.taskbar { height: 41px; flex: none; background: #04151f; display: flex; align-items: stretch; color: #fff; position: relative; }
.start { width: 48px; display: flex; align-items: center; justify-content: center; flex: none; }
.start svg { width: 16px; height: 16px; }
.tsearch { width: 289px; flex: none; background: #f3f3f3; border: 1px solid #c8c6c4; border-bottom: 0; margin-top: 1px; display: flex; align-items: center; padding-left: 11px; color: #252423; font-size: 13.800px; position: relative; }
.ts-ic { width: 17px; height: 17px; margin-right: 11px; }
.ts-spark { position: absolute; left: 215px; top: 4px; width: 62px; height: 30px; }
.tk { width: 49px; flex: none; display: flex; align-items: center; justify-content: center; position: relative; }
.tk svg { width: 24px; height: 24px; }
.tk.wa svg { width: 28px; height: 28px; }
.tk.run::after { content: ""; position: absolute; left: 5px; right: 5px; bottom: 0; height: 3px; background: #76b9ed; }
.tk.active { background: #36454f; }
.tk.photos { background: #97562a; width: 49px; }
.tk.photos::after { content: ""; position: absolute; left: 0; right: 0; bottom: 0; height: 3px; background: #ff7a00; }
.weather { display: flex; align-items: center; margin-left: 105px; font-size: 13px; width: 115px; flex: none; white-space: nowrap; }
.sun { width: 20px; height: 20px; border-radius: 50%; background: linear-gradient(#f9a908, #ea6c0a); margin-right: 10px; flex: none; }
.sunny { margin-left: 9px; }
.tray { display: flex; align-items: center; gap: 8px; margin-left: 15px; width: 135px; flex: none; }
.tray .up { width: 15px; height: 8px; }
.tr { width: 16px; height: 18px; }
.clock { display: flex; flex-direction: column; align-items: center; justify-content: center; font-size: 11.200px; line-height: 18px; width: 70px; flex: none; }
.notif { position: absolute; left: 1325px; top: 12px; width: 17px; height: 17px; }
```
